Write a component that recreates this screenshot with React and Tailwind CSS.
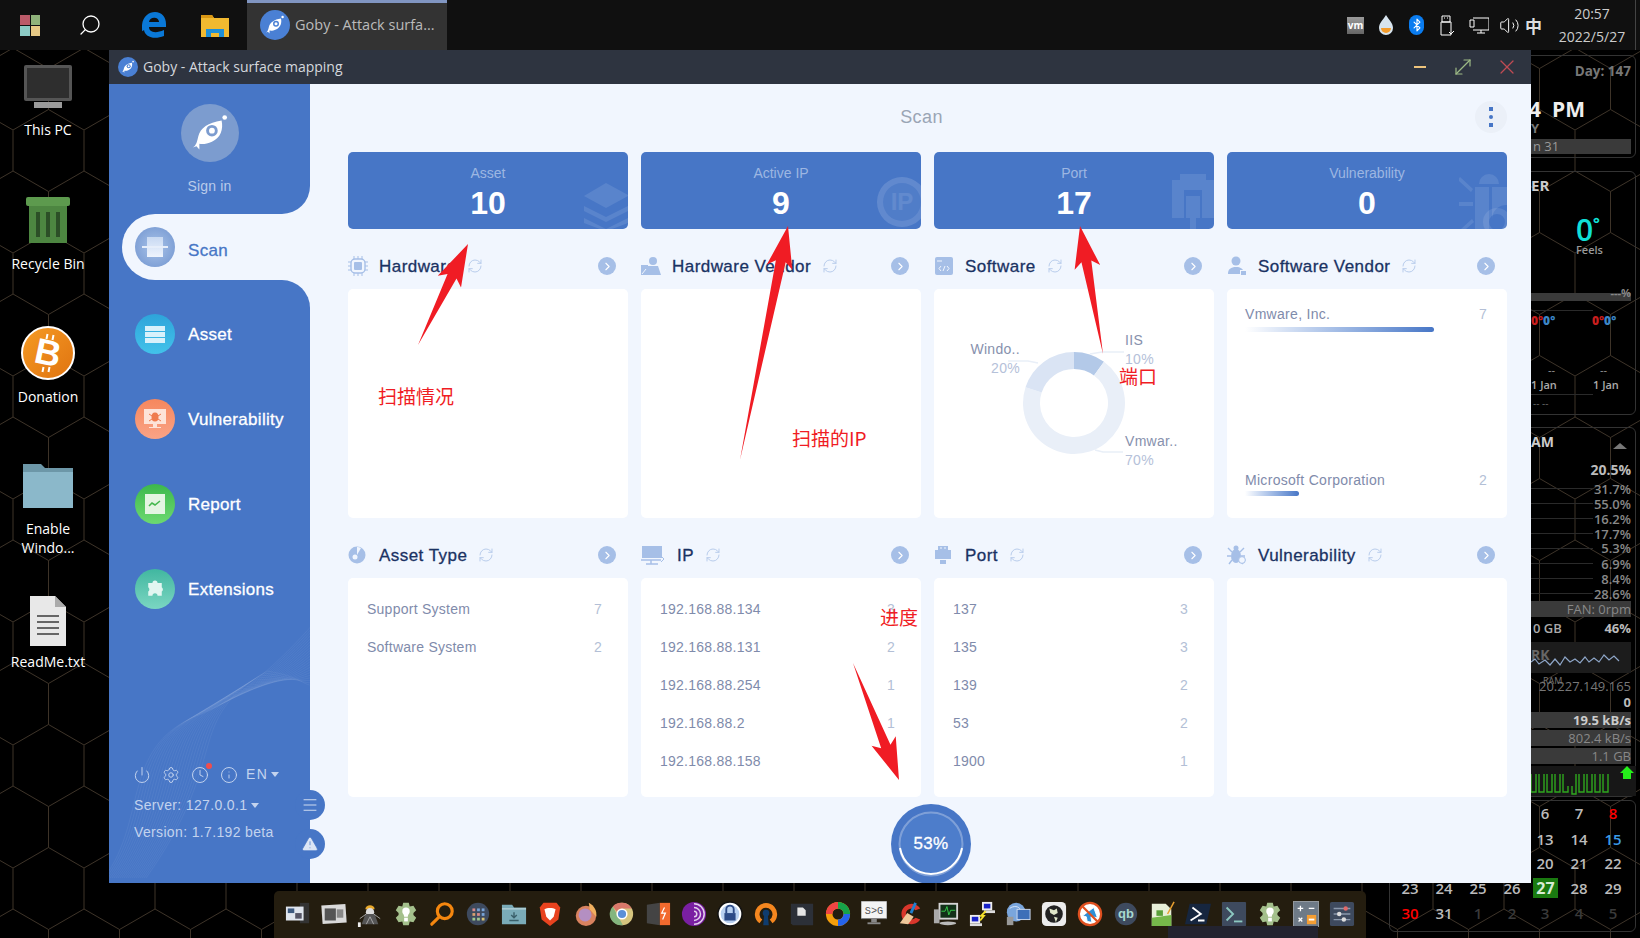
import React from "react";
import { Power, Settings, Clock, Info, RefreshCw, ChevronRight, Menu, Bluetooth, Search, Volume2, X, MoveDiagonal, TriangleAlert } from "lucide-react";

const Fish = ({ size = 30, bg = "#4a80d4", fg = "#ffffff", eye = "#4a80d4" }) => (
  <svg width={size} height={size} viewBox="0 0 30 30">
    <circle cx="15" cy="15" r="15" fill={bg} />
    <path d="M6 22.5 C8 21.5 8.4 19 9 16.5 C10 12.5 14 9.5 21 8.5 C22 13 20.5 17.5 16 19.5 C13.5 20.8 11 20.8 9.5 20.6 L9.5 23.5 L8 21.8 Z" fill={fg} />
    <circle cx="16" cy="13.8" r="3" fill={eye} />
    <circle cx="16" cy="13.8" r="1.5" fill={fg} />
    <circle cx="22.6" cy="7" r="1.2" fill={fg} />
  </svg>
);

const arrowPoints = ([tx, ty], [bx, by]) => {
  const len = Math.hypot(tx - bx, ty - by);
  const ux = (tx - bx) / len;
  const uy = (ty - by) / len;
  const nx = -uy;
  const ny = ux;
  const at = (d, w) => `${tx - ux * d + nx * w},${ty - uy * d + ny * w}`;
  return [`${bx},${by}`, at(36, 5), at(42, 13), `${tx},${ty}`, at(42, -13), at(36, -5)].join(" ");
};

const slice = (cx, cy, r, ir, a0, a1) => {
  const p = (rad, a) => {
    const t = ((a - 90) * Math.PI) / 180;
    return `${(cx + rad * Math.cos(t)).toFixed(2)} ${(cy + rad * Math.sin(t)).toFixed(2)}`;
  };
  const large = a1 - a0 > 180 ? 1 : 0;
  return `M${p(r, a0)} A${r} ${r} 0 ${large} 1 ${p(r, a1)} L${p(ir, a1)} A${ir} ${ir} 0 ${large} 0 ${p(ir, a0)} Z`;
};

const navItems = [
  { label: "Asset", circle: "bg-gradient-to-b from-[#2ea4da] to-[#42c2ea]", icon: <div className="flex w-[20px] flex-col gap-px"><i className="h-[5px] bg-[#d8f1fb]" /><i className="h-[5px] bg-[#d8f1fb]" /><i className="h-[5px] bg-[#d8f1fb]" /></div> },
  { label: "Vulnerability", circle: "bg-gradient-to-b from-[#f6875d] to-[#f9a386]", icon: <svg width="24" height="22" viewBox="0 0 24 22"><rect x="1" y="1" width="22" height="15" fill="#fde3d8" /><path d="M10 16h4v3h4v1H6v-1h4z" fill="#fde3d8" /><ellipse cx="12" cy="9" rx="3.5" ry="4.5" fill="#ef7a4c" /><path d="M6 6l3 2M18 6l-3 2M6 13l3-2M18 13l-3-2" stroke="#ef7a4c" /></svg> },
  { label: "Report", circle: "bg-gradient-to-b from-[#3cb84c] to-[#6cd970]", icon: <svg width="20" height="20" viewBox="0 0 20 20"><rect width="20" height="20" fill="#e4f5e2" /><path d="M4 12l3-3 3 2 5-4" fill="none" stroke="#45b84f" strokeWidth="1.6" /></svg> },
  { label: "Extensions", circle: "bg-gradient-to-b from-[#40b7a0] to-[#7ad6c2]", icon: <svg width="22" height="22" viewBox="-3 -3 26 26"><path d="M7 3a3 3 0 016 0h5v5a3 3 0 010 5v5h-5a3 3 0 00-6 0H2v-5a3 3 0 000-5V3z" fill="#e2f6f1" /></svg> },
];

const SmallIcon = ({ name }) => {
  const c = "#a6bfe7";
  if (name === "Hardware") return <svg width="20" height="20" viewBox="0 0 20 20"><rect x="3" y="3" width="14" height="14" rx="4" fill="none" stroke={c} strokeWidth="1.4" /><rect x="6" y="6" width="8" height="8" rx="1" fill={c} /><path d="M6 0v3M10 0v3M14 0v3M6 17v3M10 17v3M14 17v3M0 6h3M0 10h3M0 14h3M17 6h3M17 10h3M17 14h3" stroke={c} /></svg>;
  if (name === "Hardware Vendor") return <svg width="20" height="20" viewBox="0 0 20 20"><circle cx="12" cy="5" r="4" fill={c} /><path d="M7 10h10l3 9H6z" fill={c} /><rect y="9" width="7" height="10" fill={c} /><path d="M1 18l4-5" stroke="#f1f6fe" /></svg>;
  if (name === "Software") return <svg width="20" height="20" viewBox="0 0 20 20"><rect x="1" y="1" width="18" height="18" rx="2" fill={c} /><path d="M3 5h5" stroke="#f1f6fe" /><path d="M7 10l-2 2.5 2 2.5M13 10l2 2.5-2 2.5M11 10l-2 5" stroke="#f1f6fe" fill="none" /></svg>;
  if (name === "Software Vendor") return <svg width="20" height="20" viewBox="0 0 20 20"><circle cx="9" cy="5" r="4.5" fill={c} /><path d="M1 18c0-5 3-7 8-7s6 2 8 4v3z" fill={c} /><rect x="13" y="14" width="6" height="5" fill="#f1f6fe" /><rect x="14" y="15" width="5" height="4" fill={c} /></svg>;
  if (name === "Asset Type") return <svg width="18" height="18" viewBox="0 0 18 18"><circle cx="9" cy="9" r="8.5" fill={c} /><path d="M9 9V1a8 8 0 014 1z" fill="#f1f6fe" /><circle cx="7" cy="11" r="2.5" fill="#f1f6fe" /></svg>;
  if (name === "IP") return <svg width="24" height="20" viewBox="0 0 24 20"><rect x="1" y="1" width="20" height="12" fill={c} /><path d="M0 15h20M5 19h12M10 15v4" stroke={c} strokeWidth="1.5" /><path d="M20 11l3 3-3 3" fill="none" stroke={c} /></svg>;
  if (name === "Port") return <svg width="18" height="20" viewBox="0 0 18 20"><path d="M4 1h10v4h3v9H1V5h3z" fill={c} /><rect x="6" y="15" width="6" height="4" fill={c} /><path d="M7 2v2M11 2v2" stroke="#f1f6fe" /></svg>;
  return <svg width="20" height="20" viewBox="0 0 20 20"><ellipse cx="9" cy="11" rx="5" ry="7" fill={c} /><circle cx="9" cy="3" r="2.5" fill={c} /><path d="M1 3l4 4M17 3l-4 4M0 11h4M14 11h4M2 19l3-4M16 19l-3-4" stroke={c} strokeWidth="1.4" /><circle cx="15" cy="15" r="3.4" fill="#f1f6fe" stroke={c} /></svg>;
};

const Watermark = ({ type }) => {
  const c = "text-white/10";
  if (type === "layers") return (
    <svg className={`absolute bottom-0 right-0 ${c}`} width="47" height="47" viewBox="0 0 47 47" fill="currentColor">
      <path d="M25 1L47 13v1L25 26 3 14z" /><path d="M3 24l22 11 22-11v5L25 40 3 29z" /><path d="M3 36l22 11 22-11v5l-16 6H19L3 41z" />
    </svg>
  );
  if (type === "ip") return (
    <div className={`absolute right-[-6px] top-[25px] flex h-[50px] w-[50px] items-center justify-center rounded-full border-[6px] border-white/10 bg-white/5 text-[24px] font-bold ${c}`}>IP</div>
  );
  if (type === "port") return (
    <svg className={`absolute bottom-0 right-0 ${c}`} width="42" height="55" viewBox="0 0 42 55" fill="currentColor">
      <path d="M8 0h26v6h8v38H30V16H12v28H0V6h8zM14 22h14v22h-4v11h-6V44h-4z" />
    </svg>
  );
  return (
    <svg className={`absolute bottom-0 right-0 ${c}`} width="48" height="55" viewBox="0 0 48 55" fill="currentColor">
      <path d="M20 10a10 10 0 0120 0zM16 13h14v42H16zM33 13h15v18a14 14 0 00-15 14zM1 3l13 12-2 3L-1 6zM0 28h14v4H0zM2 55l11-10 2 3-8 7z" />
      <path d="M38 34a14 14 0 110 28 14 14 0 010-28zm0 6a8 8 0 100 16 8 8 0 000-16z" />
    </svg>
  );
};

const stats = [
  { label: "Asset", value: "10", mark: "layers" },
  { label: "Active IP", value: "9", mark: "ip" },
  { label: "Port", value: "17", mark: "port" },
  { label: "Vulnerability", value: "0", mark: "bug" },
];

const SectionHead = ({ title }) => (
  <div className="flex h-[60px] items-center pr-[12px] pt-[22px] pb-[8px]">
    <div className={`flex shrink-0 items-center ${title === "IP" ? "w-[36px]" : "w-[31px]"}`}><SmallIcon name={title} /></div>
    <span className="text-[17px] leading-none tracking-[0.45px] text-[#1a3263] [-webkit-text-stroke:0.3px_#1a3263]">{title}</span>
    <RefreshCw size={16} strokeWidth={1.5} className="ml-[11px] text-[#b9cdec]" />
    <div className="ml-auto flex h-[18px] w-[18px] items-center justify-center rounded-full bg-[#a6bfe7]">
      <ChevronRight size={13} strokeWidth={2} className="text-white" />
    </div>
  </div>
);

const ListPanel = ({ rows }) => (
  <div className="h-[219px] rounded-[5px] bg-white pl-[19px] pr-[26px] pt-[12px]">
    {rows.map(([name, n]) => (
      <div key={name} className="flex h-[38px] items-center justify-between text-[14px] tracking-[0.25px]">
        <span className="text-[#7f8bab]">{name}</span>
        <span className="text-[#b3bfd6]">{n}</span>
      </div>
    ))}
  </div>
);

const Donut = () => (
  <div className="relative h-[229px] rounded-[5px] bg-white">
    <svg className="absolute left-0 top-0" width="280" height="229" viewBox="0 0 280 229">
      <path d={slice(140, 114, 51, 34, 0, 36)} fill="#b3c9e8" />
      <path d={slice(140, 114, 51, 34, 36, 288)} fill="#e9eff8" />
      <path d={slice(140, 114, 51, 34, 288, 360)} fill="#dae4f4" />
      <path d="M156 65l12-2h22" fill="none" stroke="#e9eff8" strokeWidth="1.5" />
      <path d="M74 72h20l10 2" fill="none" stroke="#e9eff8" strokeWidth="1.5" />
      <path d="M161 161l8 2h20" fill="none" stroke="#e9eff8" strokeWidth="1.5" />
    </svg>
    {[
      ["IIS", "10%", "left-[191px] top-[42px]"],
      ["Windo..", "20%", "left-[36px] top-[51px] w-[50px] text-right"],
      ["Vmwar..", "70%", "left-[191px] top-[143px]"],
    ].map(([name, pct, pos]) => (
      <div key={name} className={`absolute text-[14px] leading-[19px] tracking-[0.3px] ${pos}`}>
        <div className="text-[#8791ad]">{name}</div>
        <div className="text-[#b5c1d9]">{pct}</div>
      </div>
    ))}
  </div>
);

const VendorPanel = () => (
  <div className="flex h-[229px] flex-col justify-between rounded-[5px] bg-white pb-[22px] pl-[18px] pr-[20px] pt-[16px] text-[14px] tracking-[0.3px]">
    <div>
      <div className="flex justify-between leading-[18px]"><span className="text-[#7f8bab]">Vmware, Inc.</span><span className="text-[#b3bfd6]">7</span></div>
      <div className="mt-[4px] h-[5px] w-[189px] rounded-r-full bg-gradient-to-r from-white to-[#4776c6]" />
    </div>
    <div>
      <div className="flex justify-between leading-[18px]"><span className="text-[#7f8bab]">Microsoft Corporation</span><span className="text-[#b3bfd6]">2</span></div>
      <div className="mt-[2px] h-[5px] w-[54px] rounded-r-full bg-gradient-to-r from-white to-[#4776c6]" />
    </div>
  </div>
);

const Sidebar = () => (
  <div className="relative flex w-[201px] shrink-0 flex-col font-['Liberation_Sans',sans-serif]">
    <div className="flex h-[130px] flex-col items-center rounded-br-[28px] bg-[#4776c6] pt-[20px]">
      <Fish size={58} bg="#7c9ccf" fg="#ffffff" eye="#7c9ccf" />
      <span className="mt-[14px] text-[14px] tracking-[0.2px] text-[#b9cbea]">Sign in</span>
    </div>
    <div className="bg-[#4776c6] pl-[13px]">
      <div className="flex h-[66px] items-center rounded-l-full bg-[#f1f6fe] pl-[13px]">
        <div className="flex h-[40px] w-[40px] items-center justify-center rounded-full bg-[radial-gradient(circle,#a9c3e8_0%,#6f93cf_100%)]">
          <div className="relative h-[20px] w-[16px] bg-gradient-to-b from-[#c8d9f2] to-[#eef4fd]"><i className="absolute left-[-5px] right-[-5px] top-[9px] h-[2px] bg-[#e6eefa]" /></div>
        </div>
        <span className="ml-[13px] pt-[7px] text-[17px] tracking-[0.35px] text-[#4776c6] [-webkit-text-stroke:0.3px_#4776c6]">Scan</span>
      </div>
    </div>
    <div className="relative flex-1 overflow-hidden rounded-tr-[28px] bg-[#4776c6] pl-[26px] pt-[34px]">
      <svg className="absolute bottom-0 left-0" width="201" height="270" viewBox="0 0 201 270" fill="none" stroke="#ffffff" strokeOpacity="0.05">
        {[...Array(22)].map((_, i) => (
          <path key={i} d={`M${-5 + i * 2} 265 C${40 + i * 4} ${205 - i * 3} ${10 + i * 3} ${130 - i} ${95 + i * 3} ${100 - i * 2} C${130 + i * 3} ${85 - i} ${170 + i} ${50 + i} 205 ${10 + i * 3}`} />
        ))}
      </svg>
      {navItems.map((item) => (
        <div key={item.label} className="relative mb-[45px] flex h-[40px] items-center">
          <div className={`flex h-[40px] w-[40px] items-center justify-center rounded-full ${item.circle}`}>{item.icon}</div>
          <span className="ml-[13px] pt-[2px] text-[17px] tracking-[0.3px] text-white [-webkit-text-stroke:0.3px_#ffffff]">{item.label}</span>
        </div>
      ))}
      <div className="absolute bottom-[43px] left-[24px] text-[14px] tracking-[0.35px] text-[#c3d3ee]">
        <div className="flex items-center gap-[11px]">
          <Power size={18} strokeWidth={1.3} />
          <Settings size={18} strokeWidth={1.3} />
          <div className="relative">
            <Clock size={18} strokeWidth={1.3} />
            <i className="absolute right-[-3px] top-[-3px] h-[6px] w-[6px] rounded-full bg-[#ef4d4d]" />
          </div>
          <Info size={18} strokeWidth={1.3} />
          <div className="-ml-[3px] flex items-center gap-[3px] tracking-[1.3px]">EN<i className="h-0 w-0 border-x-[4px] border-t-[5px] border-x-transparent border-t-[#c3d3ee]" /></div>
        </div>
        <div className="ml-[1px] mt-[12px] flex items-center gap-[4px] leading-[16px]">Server: 127.0.0.1<i className="h-0 w-0 border-x-[4px] border-t-[5px] border-x-transparent border-t-[#c3d3ee]" /></div>
        <div className="ml-[1px] mt-[11px] leading-[16px]">Version: 1.7.192 beta</div>
      </div>
    </div>
    <div className="absolute left-[186px] top-[706px] flex h-[30px] w-[30px] items-center justify-center rounded-full bg-[#4776c6]"><Menu size={18} strokeWidth={1} className="text-white" /></div>
    <div className="absolute left-[186px] top-[745px] flex h-[30px] w-[30px] items-center justify-center rounded-full bg-[#4776c6]"><TriangleAlert size={18} fill="#dbe5f5" strokeWidth={1} className="text-[#4776c6]" /></div>
  </div>
);

const Progress = () => (
  <div className="relative ml-[7px] flex justify-center pt-[7px]">
    <div className="relative h-[80px] w-[80px]">
      <svg width="80" height="80" viewBox="0 0 80 80">
        <circle cx="40" cy="40" r="40" fill="#4776c6" />
        <circle cx="40" cy="40" r="31" fill="#4d7dcb" />
        <circle cx="40" cy="40" r="31.5" fill="none" stroke="#ffffff" strokeOpacity="0.3" strokeWidth="2" />
        <path d="M71 44 A31.5 31.5 0 0 1 9 44" fill="none" stroke="#ffffff" strokeWidth="2" />
      </svg>
      <span className="absolute inset-0 flex items-center justify-center text-[17px] tracking-[0.3px] text-white [-webkit-text-stroke:0.3px_#ffffff]">53%</span>
    </div>
  </div>
);

const GobyWindow = () => (
  <div className="absolute left-[109px] top-[50px] flex h-[833px] w-[1422px] flex-col overflow-hidden">
    <div className="flex h-[34px] shrink-0 items-center bg-[#2e3440] pl-[9px] font-['Open_Sans',sans-serif]">
      <Fish size={20} />
      <span className="ml-[5px] pb-[1px] text-[14px] text-[#d5d8dd]">Goby - Attack surface mapping</span>
      <div className="ml-auto flex items-center pr-[12px]">
        <i className="h-[2px] w-[12px] bg-[#eec47c]" />
        <MoveDiagonal size={24} strokeWidth={1.2} className="ml-[25px] text-[#9dba85]" />
        <X size={24} strokeWidth={1.2} className="ml-[20px] text-[#c04b53]" />
      </div>
    </div>
    <div className="flex min-h-0 flex-1 bg-[#f1f6fe]">
      <Sidebar />
      <div className="min-w-0 flex-1 pl-[38px] pr-[24px] font-['Liberation_Sans',sans-serif]">
        <div className="relative flex h-[68px] items-center justify-center pr-[12px] pb-[1px] text-[18px] tracking-[0.4px] text-[#9aa5b5]">
          Scan
          <div className="absolute right-0 top-[17px] flex h-[32px] w-[32px] flex-col items-center justify-center gap-[4px] rounded-full bg-[#ebf0f8]">
            <i className="h-[4px] w-[4px] bg-[#4776c6]" /><i className="h-[4px] w-[4px] rounded-full bg-[#4776c6]" /><i className="h-[4px] w-[4px] bg-[#4776c6]" />
          </div>
        </div>
        <div className="grid grid-cols-4 gap-x-[13px]">
          {stats.map((s) => (
            <div key={s.label} className="relative flex h-[77px] flex-col items-center overflow-hidden rounded-[5px] bg-[#4776c6] pt-[13px]">
              <Watermark type={s.mark} />
              <span className="text-[14px] leading-[16px] text-[#9db6e2]">{s.label}</span>
              <span className="mt-[6px] text-[32px] font-bold leading-[33px] text-white">{s.value}</span>
            </div>
          ))}
        </div>
        <div className="grid grid-cols-4 gap-x-[13px]">
          <div><SectionHead title="Hardware" /><div className="h-[229px] rounded-[5px] bg-white" /></div>
          <div><SectionHead title="Hardware Vendor" /><div className="h-[229px] rounded-[5px] bg-white" /></div>
          <div><SectionHead title="Software" /><Donut /></div>
          <div><SectionHead title="Software Vendor" /><VendorPanel /></div>
          <div><SectionHead title="Asset Type" /><ListPanel rows={[["Support System", 7], ["Software System", 2]]} /></div>
          <div><SectionHead title="IP" /><ListPanel rows={[["192.168.88.134", 3], ["192.168.88.131", 2], ["192.168.88.254", 1], ["192.168.88.2", 1], ["192.168.88.158", 1]]} /></div>
          <div><SectionHead title="Port" /><ListPanel rows={[["137", 3], ["135", 3], ["139", 2], ["53", 2], ["1900", 1]]} /></div>
          <div><SectionHead title="Vulnerability" /><ListPanel rows={[]} /></div>
        </div>
        <Progress />
      </div>
    </div>
  </div>
);

const Annotations = () => (
  <>
    <svg className="pointer-events-none absolute left-0 top-0" width="1640" height="938" viewBox="0 0 1640 938">
      <polygon points={arrowPoints([468, 244], [418, 345])} fill="#f01c24" />
      <polygon points={arrowPoints([788, 226], [740, 460])} fill="#f01c24" />
      <polygon points={arrowPoints([1080, 226], [1103, 354])} fill="#f01c24" />
      <polygon points={arrowPoints([899, 780], [853, 663])} fill="#f01c24" />
    </svg>
    {[
      ["扫描情况", "left-[378px] top-[384px]"],
      ["扫描的IP", "left-[792px] top-[426px]"],
      ["端口", "left-[1119px] top-[364px]"],
      ["进度", "left-[880px] top-[605px]"],
    ].map(([t, pos]) => (
      <span key={t} className={`absolute text-[19px] leading-[24px] text-[#f01c24] font-['Noto_Sans_CJK_SC',sans-serif] ${pos}`}>{t}</span>
    ))}
  </>
);

const Taskbar = () => (
  <div className="relative flex h-[50px] items-center bg-[#101010] font-['Open_Sans',sans-serif]">
    <div className="ml-[20px] grid h-[21px] w-[20px] grid-cols-2 gap-[1px]">
      <i className="bg-[#bb5b69]" /><i className="bg-[#8fb27a]" /><i className="bg-[#8ccbc5]" /><i className="bg-[#e6c986]" />
    </div>
    <Search size={24} strokeWidth={1.3} className="ml-[38px] -scale-x-100 text-white" />
    <svg className="ml-[39px]" width="26" height="28" viewBox="0 0 26 28"><path d="M1 14C2 5 8 1 14 1c7 0 11 5 11 12v3H8c0 5 6 7 15 3v6c-10 4-19 1-20-6-2 2-2 2-2-5zm7-3h10c0-5-9-6-10 0z" fill="#0a78d7" /></svg>
    <svg className="ml-[34px]" width="28" height="24" viewBox="0 0 28 24"><path d="M0 2h11l2 3h15v19H0z" fill="#f1b930" /><path d="M0 2h11l2 3H0z" fill="#d99714" /><path d="M5 24v-8h18v8h-5v-4h-8v4z" fill="#1e8fd8" /></svg>
    <div className="ml-[18px] flex h-[50px] w-[200px] items-center border-t-[3px] border-[#8196c2] bg-[#333333] pb-[3px] pl-[13px]">
      <Fish size={30} />
      <span className="ml-[5px] text-[14.5px] text-[#bbbbbb]">Goby - Attack surfa...</span>
    </div>
    <div className="ml-auto flex items-center pr-[14px]">
      <span className="flex h-[17px] w-[17px] items-center justify-center bg-gradient-to-b from-[#9a9a9a] to-[#666666] text-[10px] font-bold leading-none text-white">vm</span>
      <svg className="ml-[15px]" width="14" height="20" viewBox="0 0 14 20"><path d="M7 0c3 5 7 8 7 13a7 7 0 01-14 0C0 8 4 5 7 0z" fill="#d7e4ee" /><path d="M2 13h10a5 5 0 01-10 0z" fill="#f39c2c" /></svg>
      <div className="ml-[16px] flex h-[20px] w-[15px] items-center justify-center rounded-full bg-[#0a7cf0]"><Bluetooth size={14} strokeWidth={2} className="text-white" /></div>
      <svg className="ml-[16px]" width="14" height="21" viewBox="0 0 14 21" fill="none" stroke="#fff"><path d="M2 1h8v6H2zM1 7h10v13H1z" /><path d="M4 3h1M7 3h1M9 17l2 2 3-3" /></svg>
      <svg className="ml-[15px]" width="20" height="17" viewBox="0 0 20 17" fill="none" stroke="#fff"><path d="M4 1h16v12H4M1 3h4v7H1zM12 13v3M8 16h8" /></svg>
      <Volume2 size={21} strokeWidth={1.1} className="ml-[10px] text-white" />
      <span className="ml-[5px] font-['Noto_Sans_CJK_SC',sans-serif] text-[17px] font-bold leading-none text-[#dddddd]">中</span>
      <div className="ml-[16px] w-[68px] text-center text-[14px] leading-[23px] text-[#cccccc]"><div>20:57</div><div>2022/5/27</div></div>
    </div>
    <i className="absolute right-[4px] top-0 h-[50px] w-px bg-[#444444]" />
  </div>
);

const Hexes = () => (
  <svg className="absolute left-0 top-0" width="1640" height="938" viewBox="0 0 1640 938">
    <defs>
      <pattern id="hex" x="13" y="130" width="71" height="123" patternUnits="userSpaceOnUse">
        <path d="M0 0V41L35.5 61.5L71 41V0M35.5 61.5V102.5L0 123M35.5 102.5L71 123" fill="none" stroke="#3d3328" strokeWidth="1" />
      </pattern>
    </defs>
    <rect width="1640" height="938" fill="url(#hex)" />
  </svg>
);

const DesktopIcon = ({ label, top, gap = "mt-[3px]", children }) => (
  <div className={`absolute left-0 flex w-[96px] flex-col items-center text-center text-[14px] leading-[19px] text-white font-['Open_Sans',sans-serif] ${top}`}>
    <div className="flex h-[56px] items-center justify-center">{children}</div>
    <span className={`w-[80px] ${gap}`}>{label}</span>
  </div>
);

const DesktopIcons = () => (
  <>
    <DesktopIcon label="This PC" top="top-[59px]" gap="mt-[5px]">
      <svg width="50" height="46" viewBox="0 0 50 46"><rect x="1" y="1" width="48" height="36" rx="2" fill="#555" /><rect x="4" y="4" width="42" height="30" fill="#2e2e2e" /><rect x="11" y="38" width="28" height="6" fill="#9a9a9a" /></svg>
    </DesktopIcon>
    <DesktopIcon label="Recycle Bin" top="top-[192px]" gap="mt-[6px]">
      <svg width="46" height="50" viewBox="0 0 46 50"><rect x="1" y="2" width="44" height="9" rx="2" fill="#5d9a4e" /><path d="M4 11h38v37H4z" fill="#4d8641" /><path d="M11 17h4v25h-4zM21 17h4v25h-4zM31 17h4v25h-4z" fill="#2c4f27" /></svg>
    </DesktopIcon>
    <DesktopIcon label="Donation" top="top-[325px]" gap="mt-[6px]">
      <div className="relative flex h-[54px] w-[54px] items-center justify-center rounded-full border-2 border-white bg-gradient-to-br from-[#f59a24] to-[#e07410] font-['Liberation_Sans',sans-serif] text-[36px] font-bold leading-none text-white">
        <span className="rotate-[12deg]">B</span>
        <i className="absolute left-[23px] top-[6px] h-[5px] w-[2px] rotate-[12deg] bg-white" />
        <i className="absolute left-[29px] top-[7px] h-[5px] w-[2px] rotate-[12deg] bg-white" />
        <i className="absolute bottom-[6px] left-[19px] h-[5px] w-[2px] rotate-[12deg] bg-white" />
        <i className="absolute bottom-[6px] left-[25px] h-[5px] w-[2px] rotate-[12deg] bg-white" />
      </div>
    </DesktopIcon>
    <DesktopIcon label="Enable Windo..." top="top-[457px]" gap="mt-[6px]">
      <svg width="50" height="46" viewBox="0 0 50 46"><path d="M0 2h18l4 4h28v40H0z" fill="#6d97a8" /><rect y="10" width="50" height="36" fill="#8bb8ca" /></svg>
    </DesktopIcon>
    <DesktopIcon label="ReadMe.txt" top="top-[593px]">
      <svg width="38" height="50" viewBox="0 0 38 50"><path d="M1 0h25l11 11v39H1z" fill="#e8e8e8" /><path d="M26 0l11 11H26z" fill="#aaa" /><path d="M8 20h22M8 26h22M8 32h22M8 38h22" stroke="#666" strokeWidth="2" /></svg>
    </DesktopIcon>
  </>
);

const widgetTexts = [
  ["Day: 147", "right-[9px] top-[62px] text-[13.5px] font-bold text-[#777777]"],
  ["24  PM", "right-[55px] top-[100px] text-[21px] font-bold text-[#eeeeee]"],
  ["Y", "left-[1531px] top-[119px] text-[13px] font-bold text-[#777777]"],
  ["ER", "left-[1531px] top-[176px] text-[15px] font-bold text-[#cccccc]"],
  ["Feels", "left-[1576px] top-[241px] text-[11px] font-semibold text-[#999999]"],
  ["--", "left-[1548px] top-[361px] text-[11px] text-[#999999]"],
  ["--", "left-[1600px] top-[361px] text-[11px] text-[#999999]"],
  ["1 Jan", "left-[1531px] top-[376px] text-[11px] font-semibold text-[#aaaaaa]"],
  ["1 Jan", "left-[1593px] top-[376px] text-[11px] font-semibold text-[#aaaaaa]"],
  ["-- --", "left-[1533px] top-[394px] text-[10px] text-[#666666]"],
  ["AM", "left-[1531px] top-[433px] text-[14px] font-bold text-[#cccccc]"],
  ["20.5%", "right-[9px] top-[461px] text-[14px] font-bold text-[#bbbbbb]"],
  ["31.7%", "right-[9px] top-[480px] text-[13px] font-semibold text-[#888888]"],
  ["55.0%", "right-[9px] top-[495px] text-[13px] font-semibold text-[#888888]"],
  ["16.2%", "right-[9px] top-[510px] text-[13px] font-semibold text-[#888888]"],
  ["17.7%", "right-[9px] top-[525px] text-[13px] font-semibold text-[#888888]"],
  ["5.3%", "right-[9px] top-[539px] text-[13px] font-semibold text-[#888888]"],
  ["6.9%", "right-[9px] top-[555px] text-[13px] font-semibold text-[#888888]"],
  ["8.4%", "right-[9px] top-[570px] text-[13px] font-semibold text-[#888888]"],
  ["28.6%", "right-[9px] top-[585px] text-[13px] font-semibold text-[#888888]"],
  ["0 GB", "left-[1533px] top-[619px] text-[13px] font-semibold text-[#aaaaaa]"],
  ["46%", "right-[9px] top-[619px] text-[13px] font-bold text-[#bbbbbb]"],
  ["RAM", "left-[1543px] top-[672px] text-[9px] text-[#777777]"],
  ["20.227.149.165", "right-[9px] top-[677px] text-[13px] text-[#777777]"],
  ["0", "right-[9px] top-[693px] text-[13px] font-bold text-[#bbbbbb]"],
];

const rightBars = [
  ["top-[139px]", "h-[15px] justify-start pl-[2px]", "n 31", "text-[#999999]"],
  ["top-[293px]", "h-[8px] justify-end", "", ""],
  ["top-[601px]", "h-[16px] justify-end", "FAN: 0rpm", "text-[#888888]"],
  ["top-[712px]", "h-[16px] justify-end", "19.5 kB/s", "font-bold text-[#cccccc]"],
  ["top-[730px]", "h-[16px] justify-end", "802.4 kB/s", "text-[#888888]"],
  ["top-[748px]", "h-[16px] justify-end", "1.1 GB", "text-[#888888]"],
];

const statLines = [310, 394, 488, 503, 518, 533, 548, 563, 578, 593];

const calendar = [
  [1545, 813, "6"], [1579, 813, "7"], [1613, 813, "8", "text-[#ff0000]"],
  [1545, 839, "13"], [1579, 839, "14"], [1613, 839, "15", "text-[#3b9be8]"],
  [1545, 863, "20"], [1579, 863, "21"], [1613, 863, "22"],
  [1410, 888, "23"], [1444, 888, "24"], [1478, 888, "25"], [1512, 888, "26"], [1579, 888, "28"], [1613, 888, "29"],
  [1410, 913, "30", "text-[#ff0000]"], [1444, 913, "31"], [1478, 913, "1", "text-[#3a3a3a]"], [1512, 913, "2", "text-[#3a3a3a]"], [1545, 913, "3", "text-[#3a3a3a]"], [1579, 913, "4", "text-[#3a3a3a]"], [1613, 913, "5", "text-[#3a3a3a]"],
];

const Widgets = () => (
  <div className="font-['Open_Sans',sans-serif]">
    <i className="absolute left-[1480px] right-[4px] top-[55px] h-[103px] rounded-[6px] border border-[#333333]" />
    <i className="absolute left-[1480px] right-[4px] top-[171px] h-[244px] rounded-[6px] border border-[#333333]" />
    <i className="absolute left-[1480px] right-[4px] top-[427px] h-[370px] rounded-[6px] border border-[#333333]" />
    <i className="absolute bottom-[6px] left-[1389px] right-[4px] top-[800px] rounded-[6px] border border-[#333333]" />
    {statLines.map((y) => (
      <i key={y} className="absolute left-[1531px] w-[62px] border-t border-[#2a2a2a]" style={{ top: y }} />
    ))}
    {rightBars.map(([top, h, text, cls]) => (
      <div key={top} className={`absolute left-[1531px] right-[9px] flex items-center bg-[#3a3a3a] text-[13px] leading-none ${top} ${h} ${cls}`}>{text}</div>
    ))}
    {widgetTexts.map(([t, cls], i) => (
      <span key={i} className={`absolute whitespace-pre leading-[18px] ${cls}`}>{t}</span>
    ))}
    <span className="absolute left-[1576px] top-[212px] text-[30px] font-semibold leading-[36px] text-[#10e0d8]">0</span>
    <span className="absolute left-[1593px] top-[214px] text-[16px] font-bold leading-[18px] text-[#10e0d8]">°</span>
    <span className="absolute left-[1531px] top-[313px] text-[12px] font-semibold leading-[16px]"><b className="text-[#c81e1e]">0°</b><b className="text-[#3c86c8]">0°</b></span>
    <span className="absolute left-[1592px] top-[313px] text-[12px] font-semibold leading-[16px]"><b className="text-[#c81e1e]">0°</b><b className="text-[#3c86c8]">0°</b></span>
    <span className="absolute right-[9px] top-[286px] text-[11px] font-bold leading-[14px] text-[#888888]">---%</span>
    <i className="absolute left-[1613px] top-[443px] h-0 w-0 border-x-[7px] border-b-[6px] border-x-transparent border-b-[#777777]" />
    <div className="absolute left-[1531px] right-[9px] top-[642px] h-[31px] bg-[#1c1c1c]">
      <span className="absolute left-0 top-[5px] text-[14px] font-bold leading-[16px] text-[#666666]">RK</span>
      <svg className="absolute left-0 top-0" width="100" height="31" viewBox="0 0 100 31"><path d="M0 20l4-3 4 5 6-4 5 5 5-6 5 6 5-8 5 5 5-3 5 4 5-6 4 5 5-4 5 4 5-7 5 5 5-4 5 5" fill="none" stroke="#8ea6c8" strokeWidth="1.2" /></svg>
    </div>
    <div className="absolute left-[1531px] right-[4px] top-[766px] h-[30px] bg-[#171717]">
      <svg width="105" height="30" viewBox="0 0 105 30"><path d="M0 8v18h5V8m3 0v18h5V8m3 0v18h5V8m3 0v18h5V8m3 0v18h5V20m4 0v8h4V8m3 0v18h5V8m3 0v18h5V8m3 0v18h5V8m3 0v18h5V8" fill="none" stroke="#2fa81f" strokeWidth="1.4" /></svg>
      <svg className="absolute right-[2px] top-0" width="14" height="14" viewBox="0 0 14 14"><path d="M7 0l7 7h-3v6H3V7H0z" fill="#25f01a" /></svg>
    </div>
    <i className="absolute left-[1533px] top-[878px] h-[20px] w-[25px] bg-[#1a7a10]" />
    <span className="absolute left-[1533px] top-[878px] w-[25px] text-center text-[16px] font-bold leading-[20px] text-[#d8ecd5]">27</span>
    {calendar.map(([x, y, t, cls]) => (
      <span key={`${x}-${y}`} className={`absolute w-[30px] -translate-x-1/2 -translate-y-1/2 text-center text-[15px] font-semibold leading-[20px] ${cls || "text-[#bbbbbb]"}`} style={{ left: x, top: y }}>{t}</span>
    ))}
  </div>
);

const dockIcons = [
  <svg viewBox="0 0 28 28"><rect x="16" y="2" width="10" height="22" fill="#333" /><rect x="1" y="6" width="19" height="15" fill="#dfe5ee" /><rect x="3" y="8" width="7" height="5" fill="#3d5a80" /><rect x="11" y="13" width="7" height="6" fill="#556" /></svg>,
  <svg viewBox="0 0 28 28"><rect x="1" y="4" width="26" height="20" fill="#dadada" transform="rotate(-4 14 14)" /><rect x="4" y="8" width="12" height="13" fill="#555" /><rect x="17" y="9" width="7" height="9" fill="#888" /></svg>,
  <svg viewBox="0 0 28 28"><path d="M9 9c0-6 10-6 10 0z" fill="#e8a92c" /><circle cx="14" cy="12" r="4.5" fill="#ddd" /><path d="M5 25l4-11h10l4 11z" fill="#555" /><path d="M3 19l7-5M25 19l-7-5M10 25l4-8 4 8" stroke="#aaa" fill="none" /><rect x="1" y="23" width="3" height="5" fill="#eee" /></svg>,
  <svg viewBox="0 0 28 28"><path d="M11 2h6l1 4 4-1 3 5-3 3v2l3 3-3 5-4-1-1 4h-6l-1-4-4 1-3-5 3-3v-2L3 10l3-5 4 1z" fill="#a4c08c" /><path d="M10 11a4 4 0 018 0c0 3-2 3-2 6h-4c0-3-2-3-2-6z" fill="#fff" /><rect x="12" y="18" width="4" height="4" fill="#fff" /></svg>,
  <svg viewBox="0 0 28 28"><circle cx="17" cy="11" r="8" fill="none" stroke="#f5870f" strokeWidth="3.4" /><path d="M11 17l-8 8" stroke="#f5870f" strokeWidth="3.4" strokeLinecap="round" /></svg>,
  <svg viewBox="0 0 28 28"><circle cx="14" cy="14" r="12" fill="#3e4a5e" /><g fill="#78a4d8"><rect x="8" y="8" width="3" height="3" fill="#d88a8a" /><rect x="13" y="8" width="3" height="3" /><rect x="18" y="8" width="3" height="3" /><rect x="8" y="13" width="3" height="3" fill="#d8a070" /><rect x="13" y="13" width="3" height="3" fill="#d88a8a" /><rect x="18" y="13" width="3" height="3" /><rect x="8" y="18" width="3" height="3" fill="#a0c890" /><rect x="13" y="18" width="3" height="3" fill="#a0c890" /><rect x="18" y="18" width="3" height="3" fill="#d8c070" /></g></svg>,
  <svg viewBox="0 0 28 28"><path d="M1 4h11l2 3h13v18H1z" fill="#7aabb8" /><rect x="1" y="8" width="26" height="1" fill="#cfe2e7" /><path d="M14 12v6M11 15l3 3 3-3M9 21h10" stroke="#3a5f6a" strokeWidth="1.5" fill="none" /></svg>,
  <svg viewBox="0 0 28 28"><path d="M7 2h14l4 5-2 13-9 7-9-7L3 7z" fill="#e8431f" /><path d="M8 9c3-2 9-2 12 0l-2 8-4 4-4-4z" fill="#fff" /></svg>,
  <svg viewBox="0 0 28 28"><circle cx="14" cy="16" r="11" fill="#d9825f" /><circle cx="13" cy="15" r="7" fill="#b48fc2" /><path d="M17 2c6 3 9 9 8 15L18 9z" fill="#f0b060" /></svg>,
  <svg viewBox="0 0 28 28"><circle cx="14" cy="14" r="12" fill="#d6c57e" /><path d="M14 2a12 12 0 0110.5 6H14a6 6 0 00-5.5 3.5L4 6a12 12 0 0110-4z" fill="#d9786a" /><path d="M4 6l6 11 5 9A12 12 0 014 6z" fill="#84b57e" /><circle cx="14" cy="14" r="6" fill="#fff" /><circle cx="14" cy="14" r="4.4" fill="#5a8fd8" /></svg>,
  <svg viewBox="0 0 28 28"><path d="M2 4l14-2v24L2 24z" fill="#444" /><path d="M16 2h11v24H16z" fill="#f26a2e" /><path d="M21 7l-3 6h4l-3 7" fill="none" stroke="#fff" strokeWidth="1.3" /></svg>,
  <svg viewBox="0 0 28 28"><circle cx="14" cy="14" r="13" fill="#7a1fa2" /><path d="M14 7a7 7 0 010 14M14 3a11 11 0 010 22M14 11a3 3 0 010 6" fill="none" stroke="#e3d0ec" strokeWidth="1.6" /></svg>,
  <svg viewBox="0 0 28 28"><circle cx="14" cy="14" r="13" fill="#fff" stroke="#111" strokeWidth="1.6" /><circle cx="14" cy="14" r="10" fill="#b8d0f0" /><rect x="8" y="13" width="12" height="8" fill="#2c4a86" /><path d="M10 13V9a4 4 0 018 0v4" fill="none" stroke="#2c4a86" strokeWidth="2" /></svg>,
  <svg viewBox="0 0 28 28"><path d="M7 24a12 12 0 1114 0l-3-4a7 7 0 10-8 0z" fill="#f5871f" /><circle cx="14" cy="13" r="3.6" fill="#0f3c6e" /><path d="M12 15h4l1 11h-6z" fill="#0f3c6e" /></svg>,
  <svg viewBox="0 0 28 28"><path d="M2 3h24v23H4l-2-2z" fill="#2c3038" /><path d="M9 7h6l3 3v6H9z" fill="#e5e5e5" /></svg>,
  <svg viewBox="0 0 28 28"><circle cx="14" cy="14" r="9.5" fill="none" stroke="#f59e0b" strokeWidth="7" /><path d="M4.5 14A9.5 9.5 0 0114 4.5" fill="none" stroke="#ef4444" strokeWidth="7" /><path d="M14 4.5A9.5 9.5 0 0123.5 14" fill="none" stroke="#16a34a" strokeWidth="7" /><path d="M23.5 14A9.5 9.5 0 0114 23.5" fill="none" stroke="#2563eb" strokeWidth="7" /></svg>,
  <svg viewBox="0 0 28 28"><rect width="28" height="19" fill="#f4f4f4" stroke="#777" /><text x="14" y="14" textAnchor="middle" fontSize="11" fontFamily="Liberation Mono" fill="#555">S&gt;G</text><rect x="11" y="19" width="6" height="4" fill="#888" /><rect x="7" y="23" width="14" height="2" fill="#888" /></svg>,
  <svg viewBox="0 0 28 28"><path d="M25 8a11 11 0 100 12l-5-2a6 6 0 110-8z" fill="#d9362b" /><path d="M20 2l-5 11" stroke="#1e7fd0" strokeWidth="3" /><path d="M11 13l7 4-6 8-9-1z" fill="#f0c89a" /></svg>,
  <svg viewBox="0 0 28 28"><rect x="6" y="2" width="21" height="18" fill="#d5d5d5" /><rect x="8" y="4" width="17" height="14" fill="#123018" /><path d="M9 11h4l2-5 2 9 2-5h5" fill="none" stroke="#35d04a" /><path d="M1 9h6v15H1z" fill="#aaa" /><ellipse cx="16" cy="24" rx="9" ry="2" fill="#bbb" /></svg>,
  <svg viewBox="0 0 28 28"><rect x="14" y="1" width="11" height="9" fill="#eee" /><rect x="16" y="3" width="7" height="5" fill="#1822c8" /><rect x="16" y="10" width="12" height="3" fill="#ddd" /><rect x="1" y="15" width="11" height="9" fill="#eee" /><rect x="3" y="17" width="7" height="5" fill="#1822c8" /><rect x="1" y="24" width="13" height="3" fill="#ddd" /><path d="M18 11l-5 5h3l-4 5" fill="none" stroke="#f5e12b" strokeWidth="2" /></svg>,
  <svg viewBox="0 0 28 28"><circle cx="12" cy="12" r="10" fill="#7aa6dc" /><path d="M5 8c4-3 10-3 12 2" fill="none" stroke="#dfeafa" /><rect x="13" y="9" width="14" height="11" fill="#3e6fb8" stroke="#cfdcf0" /><rect x="2" y="17" width="7" height="9" fill="#999" /></svg>,
  <svg viewBox="0 0 28 28"><rect x="1" y="1" width="26" height="26" rx="5" fill="#ececec" /><circle cx="14" cy="14" r="9.5" fill="#222" /><path d="M9 8l5 2 3-2 1 5-4 2-4-2zM14 17l4 1-2 5z" fill="#dfe6c8" /></svg>,
  <svg viewBox="0 0 28 28"><circle cx="14" cy="14" r="12" fill="#fff" stroke="#e0501f" strokeWidth="2.4" /><path d="M6 16l12-9 4 11-7-1 1 6-5-1-1-5z" fill="#2f8fd6" stroke="#fff" /><path d="M6 6l16 16" stroke="#e0501f" strokeWidth="2.4" /></svg>,
  <svg viewBox="0 0 28 28"><circle cx="14" cy="14" r="12" fill="#3e4a5e" /><text x="14" y="18.5" textAnchor="middle" fontSize="14" fontWeight="700" fontFamily="Liberation Sans" fill="#a8d8d0">qb</text></svg>,
  <svg viewBox="0 0 28 28"><path d="M3 3h15l6 6v18H3z" fill="#e8efd8" /><path d="M3 18l21-3v12H3z" fill="#76b84a" /><path d="M8 10h7v6H8z" fill="#5aa03a" /><path d="M20 14L27 1" stroke="#e8a030" strokeWidth="1.6" /></svg>,
  <svg viewBox="0 0 28 28"><path d="M5 3h23l-5 22H0z" fill="#16263f" /><path d="M8 7l9 7-11 7M14 21h7" fill="none" stroke="#fff" strokeWidth="2" /></svg>,
  <svg viewBox="0 0 28 28"><rect x="1" y="1" width="26" height="26" rx="1" fill="#3e4a5e" /><path d="M6 7l7 7-7 7" fill="none" stroke="#8cc8c0" strokeWidth="2" /><path d="M14 22h9" stroke="#8cc8c0" strokeWidth="2" /></svg>,
  <svg viewBox="0 0 28 28"><path d="M11 2h6l1 4 4-1 3 5-3 3v2l3 3-3 5-4-1-1 4h-6l-1-4-4 1-3-5 3-3v-2L3 10l3-5 4 1z" fill="#a4c08c" /><path d="M10 11a4 4 0 018 0c0 3-2 3-2 6h-4c0-3-2-3-2-6z" fill="#fff" /><rect x="12" y="18" width="4" height="4" fill="#fff" /></svg>,
  <svg viewBox="0 0 28 28"><rect width="28" height="28" rx="2" fill="#6e7a87" stroke="#bbb" /><path d="M5 8h6M8 5v6M17 8h6M6 18l4 4M10 18l-4 4" stroke="#fff" strokeWidth="1.4" /><rect x="15" y="15" width="10" height="10" fill="#f59e33" /><rect x="17" y="19" width="6" height="2" fill="#fff" /></svg>,
  <svg viewBox="0 0 28 28"><rect x="1" y="1" width="26" height="26" rx="2" fill="#3e4a5e" /><path d="M5 8h18M5 14h18M5 20h18" stroke="#8a98ac" strokeWidth="1.5" /><circle cx="18" cy="8" r="2.4" fill="#e06a6a" /><circle cx="11" cy="14" r="2.4" fill="#dcdcdc" /><circle cx="16" cy="20" r="2.4" fill="#dcdcdc" /></svg>,
];

const Dock = () => (
  <div className="absolute bottom-0 left-[274px] flex h-[47px] w-[1092px] items-center rounded-t-[5px] bg-[#241d0f] pb-[1px] pl-[6px]">
    {dockIcons.map((icon, i) => (
      <div key={i} className="flex w-[36px] shrink-0 justify-center [&>svg]:h-[26px] [&>svg]:w-[26px]">{icon}</div>
    ))}
    <i className="absolute bottom-0 left-[894px] h-[12px] w-[150px] bg-[#23232f]" />
  </div>
);

export default function App() {
  return (
    <div className="relative h-[938px] w-[1640px] overflow-hidden bg-black">
      <Hexes />
      <Taskbar />
      <DesktopIcons />
      <Widgets />
      <Dock />
      <GobyWindow />
      <Annotations />
    </div>
  );
}
